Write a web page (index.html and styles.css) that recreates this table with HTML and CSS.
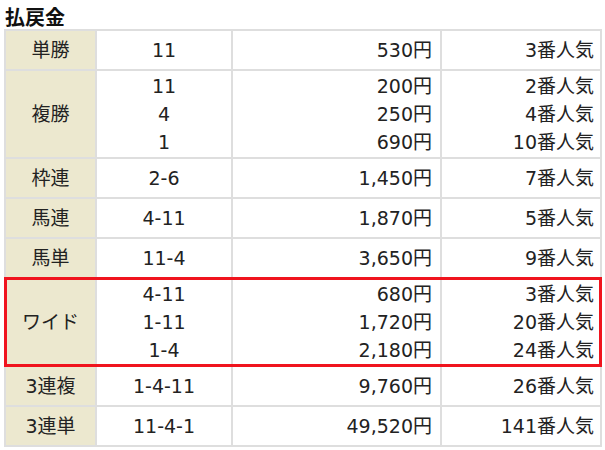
FILE: index.html
```html
<!DOCTYPE html>
<html lang="ja">
<head>
<meta charset="utf-8">
<link rel="stylesheet" href="styles.css">
</head>
<body>
<h2 class="title">払戻金</h2>
<table class="pay">
  <colgroup>
    <col class="c1"><col class="c2"><col class="c3"><col class="c4">
  </colgroup>
  <tbody>
    <tr class="single">
      <th>単勝</th><td class="num">11</td><td class="yen">530円</td><td class="pop">3番人気</td>
    </tr>
    <tr>
      <th>複勝</th><td class="num">11<br>4<br>1</td><td class="yen">200円<br>250円<br>690円</td><td class="pop">2番人気<br>4番人気<br>10番人気</td>
    </tr>
    <tr class="single">
      <th>枠連</th><td class="num">2-6</td><td class="yen">1,450円</td><td class="pop">7番人気</td>
    </tr>
    <tr class="single">
      <th>馬連</th><td class="num">4-11</td><td class="yen">1,870円</td><td class="pop">5番人気</td>
    </tr>
    <tr class="single">
      <th>馬単</th><td class="num">11-4</td><td class="yen">3,650円</td><td class="pop">9番人気</td>
    </tr>
    <tr class="mark">
      <th>ワイド</th><td class="num">4-11<br>1-11<br>1-4</td><td class="yen">680円<br>1,720円<br>2,180円</td><td class="pop">3番人気<br>20番人気<br>24番人気</td>
    </tr>
    <tr class="single">
      <th>3連複</th><td class="num">1-4-11</td><td class="yen">9,760円</td><td class="pop">26番人気</td>
    </tr>
    <tr class="single">
      <th>3連単</th><td class="num">11-4-1</td><td class="yen">49,520円</td><td class="pop">141番人気</td>
    </tr>
  </tbody>
</table>
</body>
</html>
```
FILE: styles.css
```css
html, body {
  margin: 0;
  background: #fff;
}
body {
  padding: 0 0 0 4px;
  font-family: "DejaVu Sans", "Noto Sans CJK JP", sans-serif;
  color: #222;
}
.title {
  margin: 0;
  padding: 5px 0 0 1px;
  height: 24px;
  font-family: "Noto Sans CJK JP", sans-serif;
  font-size: 20px;
  line-height: 24px;
  font-weight: 700;
  color: #111;
}
.pay {
  border-collapse: collapse;
  width: 596px;
  table-layout: fixed;
  font-size: 19px;
  line-height: 28px;
}
.c1 { width: 91px; }
.c2 { width: 136px; }
.c3 { width: 209px; }
.c4 { width: 160px; }
.pay th, .pay td {
  border: 2px solid #dedede;
  padding: 1px 8px;
  vertical-align: middle;
  white-space: nowrap;
}
.pay th {
  background: #ece8cf;
  font-weight: 400;
  text-align: center;
}
.pay td.num { text-align: center; }
.pay td.yen, .pay td.pop { text-align: right; }
.pay td.pop { padding-right: 6px; }
.single { height: 40px; }
.mark {
  outline: 3px solid #f0141e;
  outline-offset: -2px;
}
```
